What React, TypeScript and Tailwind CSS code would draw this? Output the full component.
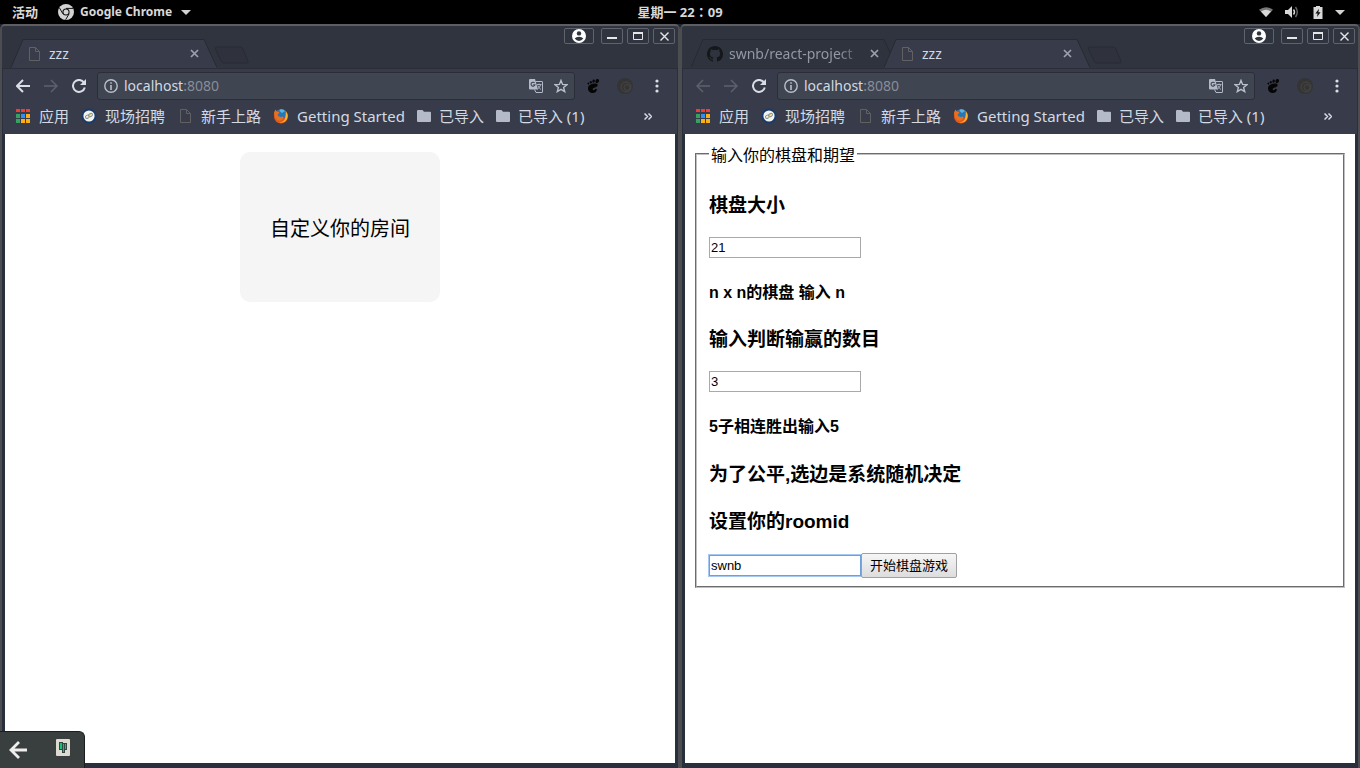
import type { ReactNode } from "react";

const UI_FONT = "font-['Noto_Sans','Noto_Sans_CJK_SC',sans-serif]";
const PAGE_FONT = "font-['Liberation_Sans','Noto_Sans_CJK_SC',sans-serif]";

function ChromeIcon() {
  return (
    <svg className="size-4" viewBox="0 0 16 16" aria-hidden="true">
      <circle cx="8" cy="8" r="8" fill="#d3d3d3" />
      <circle cx="8" cy="8" r="3.6" fill="#111" />
      <circle cx="8" cy="8" r="2.5" fill="#d3d3d3" />
      <path d="M8 4.4h7M4.9 9.8 1.4 3.8M11.1 9.8 7.6 15.8" stroke="#111" strokeWidth="1" />
    </svg>
  );
}

function CaretDown() {
  return (
    <svg className="h-[5px] w-[10px]" viewBox="0 0 10 5" aria-hidden="true">
      <path d="M0 0h10L5 5z" fill="#d3d3d3" />
    </svg>
  );
}

function TopBar() {
  return (
    <header
      className={`grid h-6 shrink-0 grid-cols-[1fr_auto_1fr] items-center bg-black text-[12px] leading-6 font-bold text-[#d8d8d8] ${UI_FONT}`}
    >
      <div className="flex items-center pl-3">
        <button type="button" className="text-[13px]">活动</button>
        <button type="button" className="ml-5 flex items-center gap-[6px]">
          <ChromeIcon />
          <span className="pr-[3px]">Google Chrome</span>
          <CaretDown />
        </button>
      </div>
      <time className="font-['Noto_Sans','Noto_Sans_CJK_TC',sans-serif] text-[13px]">星期一 22：09</time>
      <div className="flex items-center justify-end pr-[15px]">
        <svg className="h-[10px] w-[14px]" viewBox="0 0 14 10" role="img" aria-label="Wi-Fi">
          <path d="M0 2.8Q7-2.4 14 2.8L7 10z" fill="#777" />
          <path d="M2 4.4Q7 1 12 4.4L7 10z" fill="#d8d8d8" />
        </svg>
        <svg className="ml-3 h-3 w-[14px]" viewBox="0 0 14 12" role="img" aria-label="音量">
          <path d="M0 4h3l4-4v12L3 8H0z" fill="#d8d8d8" />
          <path d="M8.5 3.5q2 2.5 0 5" stroke="#d8d8d8" strokeWidth="1.4" fill="none" />
          <path d="M10.5 1q3.6 5 0 10" stroke="#666" strokeWidth="1.4" fill="none" />
        </svg>
        <svg className="ml-[14px] h-[13px] w-[10px]" viewBox="0 0 10 13" role="img" aria-label="电池">
          <path d="M3 0h4v1h2.5v12h-9V1H3z" fill="#d8d8d8" />
          <path d="M6 2.8 2.4 7.4h2.2L4 11l3.600-4.700H5.400z" fill="#111" />
        </svg>
        <span className="ml-3"><CaretDown /></span>
      </div>
    </header>
  );
}

function DocIcon() {
  return (
    <svg className="h-[14px] w-[11px] shrink-0" viewBox="0 0 11 14" fill="none" stroke="#616161" aria-hidden="true">
      <path d="M.5.5h6l4 4v9H.5z M6.5.5v4h4" />
    </svg>
  );
}

function GithubIcon() {
  return (
    <svg className="size-4 shrink-0" viewBox="0 0 16 16" fill="#15171b" aria-hidden="true">
      <path d="M8 0C3.58 0 0 3.58 0 8c0 3.54 2.29 6.53 5.47 7.59.4.07.55-.17.55-.38 0-.19-.01-.82-.01-1.49-2.01.37-2.53-.49-2.69-.94-.09-.23-.48-.94-.82-1.13-.28-.15-.68-.52-.01-.53.63-.01 1.08.58 1.23.82.72 1.21 1.87.87 2.33.66.07-.52.28-.87.51-1.07-1.78-.2-3.64-.89-3.64-3.95 0-.87.31-1.59.82-2.15-.08-.2-.36-1.02.08-2.12 0 0 .67-.21 2.2.82a7.6 7.6 0 0 1 4 0c1.53-1.04 2.2-.82 2.2-.82.44 1.1.16 1.92.08 2.12.51.56.82 1.27.82 2.15 0 3.07-1.87 3.75-3.65 3.95.29.25.54.73.54 1.48 0 1.07-.01 1.93-.01 2.2 0 .21.15.46.55.38A8.01 8.01 0 0 0 16 8c0-4.42-3.58-8-8-8z" />
    </svg>
  );
}

type TabInfo = { title: string; active: boolean; icon: "doc" | "github" };

function Tab({ tab }: { tab: TabInfo }) {
  return (
    <div className={tab.active ? "relative z-10 -mr-[13px] h-[29px] w-[206px]" : "relative -mr-[13px] h-[29px] w-[206px]"}>
      <svg className="absolute inset-0 size-full" viewBox="0 0 206 29" preserveAspectRatio="none" aria-hidden="true">
        <path
          d={tab.active ? "M0 29 12 .5H193L206 29z" : "M0 28 12 .5H193L205 28z"}
          fill={tab.active ? "#383c4a" : "#2f333e"}
        />
        <path d="M0 28.5 12 .5H193L206 28.5" fill="none" stroke="#272a34" />
      </svg>
      <div className="relative flex h-full items-center pr-[18px] pl-[18px]">
        <button
          type="button"
          className={
            tab.active
              ? "flex min-w-0 flex-1 items-center text-left text-[14px] leading-5 text-[#d3dae3]"
              : "-ml-[2px] flex min-w-0 flex-1 items-center text-left text-[14px] leading-5 text-[#9298a5]"
          }
        >
          <span className={tab.icon === "doc" ? "flex w-5 shrink-0 items-center" : "flex w-[22px] shrink-0 items-center"}>
            {tab.icon === "doc" ? <DocIcon /> : <GithubIcon />}
          </span>
          <span
            className={
              tab.icon === "github"
                ? "flex-1 overflow-hidden whitespace-nowrap [mask-image:linear-gradient(to_right,#000_80%,transparent)]"
                : "flex-1 overflow-hidden whitespace-nowrap"
            }
          >
            {tab.title}
          </span>
        </button>
        <button type="button" aria-label="关闭标签页" className="ml-1 flex size-[9px] items-center justify-center">
          <svg className="size-[9px]" viewBox="0 0 9 9" stroke="#9ba1ad" strokeWidth="1.7" aria-hidden="true">
            <path d="M1 1l7 7M8 1 1 8" />
          </svg>
        </button>
      </div>
    </div>
  );
}

function FrameButton({ label, wide, children }: { label: string; wide?: boolean; children: ReactNode }) {
  return (
    <button
      type="button"
      aria-label={label}
      className={
        wide
          ? "mr-[3px] flex h-4 w-[30px] items-center justify-center rounded-[2px] border border-[#5f636d]"
          : "flex h-4 w-[22px] items-center justify-center rounded-[2px] border border-[#5f636d]"
      }
    >
      {children}
    </button>
  );
}

function FrameControls() {
  return (
    <div className="ml-auto flex gap-1 self-start pt-[2px]">
      <FrameButton label="用户" wide>
        <svg className="size-[14px] shrink-0" viewBox="0 0 14 14" aria-hidden="true">
          <circle cx="7" cy="7" r="7" fill="#fff" />
          <circle cx="7" cy="4.4" r="2.2" fill="#2f343f" />
          <path d="M2.700 9.600Q4 7.800 7 7.800T11.300 9.600Q9.600 12 7 12T2.700 9.600z" fill="#2f343f" />
        </svg>
      </FrameButton>
      <FrameButton label="最小化">
        <svg className="size-[10px]" viewBox="0 0 10 10" aria-hidden="true">
          <path d="M0 7h10" stroke="#e4e6ea" strokeWidth="2" />
        </svg>
      </FrameButton>
      <FrameButton label="最大化">
        <svg className="h-2 w-[10px]" viewBox="0 0 10 8" aria-hidden="true">
          <path d="M.5 1v6.5h9V1" stroke="#e4e6ea" fill="none" />
          <path d="M0 1h10" stroke="#e4e6ea" strokeWidth="2" />
        </svg>
      </FrameButton>
      <FrameButton label="关闭">
        <svg className="size-[9px]" viewBox="0 0 9 9" stroke="#e4e6ea" strokeWidth="1.4" aria-hidden="true">
          <path d="M.5.5l8 8M8.5.5l-8 8" />
        </svg>
      </FrameButton>
    </div>
  );
}

function Arrow({ dim, forward }: { dim: boolean; forward?: boolean }) {
  return (
    <svg
      className="h-[14px] w-[14px]"
      viewBox="0 0 14 14"
      fill="none"
      stroke={dim ? "#5d616d" : "#d9dde5"}
      strokeWidth={dim ? 1.5 : 2}
      aria-hidden="true"
    >
      {forward ? <path d="M0 7h13M7 1l6 6-6 6" /> : <path d="M14 7H1M7 1 1 7l6 6" />}
    </svg>
  );
}

function Toolbar({ canGoBack }: { canGoBack: boolean }) {
  return (
    <div className="flex h-[34px] items-center pl-[13px]">
      <div className="flex gap-[14px]">
        <button type="button" aria-label="后退"><Arrow dim={!canGoBack} /></button>
        <button type="button" aria-label="前进"><Arrow dim forward /></button>
        <button type="button" aria-label="重新加载">
          <svg className="size-[14px]" viewBox="0 0 14 14" aria-hidden="true">
            <path d="M12 3.6A6 6 0 1 0 12.8 8.5" fill="none" stroke="#d9dde5" strokeWidth="2" />
            <path d="M14 0v6H8z" fill="#d9dde5" />
          </svg>
        </button>
      </div>
      <div className="ml-[11px] flex h-7 min-w-0 flex-1 items-center rounded-[3px] border border-[#2b2e39] bg-[#404552] px-[6px]">
        <svg className="size-[14px] shrink-0" viewBox="0 0 14 14" aria-hidden="true">
          <circle cx="7" cy="7" r="6.2" fill="none" stroke="#b9bfcb" strokeWidth="1.4" />
          <path d="M6.2 3.2h1.6v1.6H6.2zM6.2 6h1.6v5H6.2z" fill="#b9bfcb" />
        </svg>
        <div className="ml-[6px] flex-1 text-[14px] leading-5 text-[#d3dae3]">
          localhost<span className="text-[#878d9a]">:8080</span>
        </div>
        <button type="button" aria-label="翻译此页">
          <svg className="size-[14px]" viewBox="0 0 14 14" aria-hidden="true">
            <path d="M1 0h5l3 10.5H1q-1 0-1-1V1q0-1 1-1z" fill="#b4bac8" />
            <path d="M6.500 2.500H13q.5 0 .5.5v10q0 .5-.5.5H7L5.500 10.500" fill="none" stroke="#b4bac8" />
            <path d="M5.600 3.900A2 2 0 1 0 6 5.700H4.200" fill="none" stroke="#404552" strokeWidth="1.1" />
            <path d="M8 5.500h4.500M10.200 4.500v1M11.800 5.500Q11 8.500 8.500 10M8.800 6.500q1 2.500 3.200 4" fill="none" stroke="#b4bac8" strokeWidth=".9" />
          </svg>
        </button>
        <button type="button" aria-label="添加书签" className="ml-[11px]">
          <svg className="size-[14px]" viewBox="0 0 14 14" aria-hidden="true">
            <path d="M7 1.400l1.600 4 4.300.3-3.300 2.700 1.100 4.200L7 10.300l-3.700 2.300 1.100-4.200L1.100 5.700l4.300-.3z" fill="none" stroke="#b9bfcb" strokeWidth="1.400" />
          </svg>
        </button>
      </div>
      <div className="flex w-[102px] shrink-0 items-center pl-3">
        <button type="button" aria-label="GNOME">
          <svg className="h-[14px] w-3" viewBox="0 0 12 14" fill="#050505" aria-hidden="true">
            <ellipse cx="10.2" cy="2" rx="1.7" ry="2.1" transform="rotate(20 10.2 2)" />
            <ellipse cx="6.6" cy="2.1" rx="1.2" ry="1.6" transform="rotate(10 6.6 2.1)" />
            <ellipse cx="3.8" cy="3.2" rx="1" ry="1.3" />
            <ellipse cx="1.4" cy="4.6" rx=".9" ry="1.1" />
            <path d="M8.8 4.6C5 4.6 1 6 1 9.4 1 12 3.2 14 5.6 14c2 0 4-1.200 4.200-3 .2-1.500-1.400-1.400-2-.4-.6 1-1.900.9-2.100-.1C5.400 8.600 10 8.800 10.600 6.600c.3-1.200-.5-2-1.800-2z" />
          </svg>
        </button>
        <button type="button" aria-label="扩展程序" className="ml-[18px]">
          <svg className="size-4" viewBox="0 0 16 16" fill="none" aria-hidden="true">
            <circle cx="8" cy="8" r="8" fill="#343435" />
            <circle cx="9" cy="9" r="5" stroke="#454546" />
            <circle cx="10" cy="9.500" r="3" stroke="#454546" />
          </svg>
        </button>
        <button type="button" aria-label="菜单" className="ml-[22px]">
          <svg className="h-[14px] w-[4px]" viewBox="0 0 4 14" fill="#d9dde5" aria-hidden="true">
            <circle cx="2" cy="2" r="1.600" />
            <circle cx="2" cy="7" r="1.600" />
            <circle cx="2" cy="12" r="1.600" />
          </svg>
        </button>
      </div>
    </div>
  );
}

function AppsIcon() {
  return (
    <svg className="size-[14px]" viewBox="0 0 14 14" aria-hidden="true">
      <path d="M0 0h4v3H0zM5 0h4v3H5zM10 0h4v3h-4z" fill="#f03c32" />
      <path d="M0 5h4v4H0zM0 10h4v4H0z" fill="#34a35f" />
      <path d="M5 5h4v4H5z" fill="#2f8df5" />
      <path d="M10 5h4v4h-4zM5 10h4v4H5zM10 10h4v4h-4z" fill="#fbae16" />
    </svg>
  );
}

function JobsIcon() {
  return (
    <svg className="size-4" viewBox="0 0 16 16" aria-hidden="true">
      <circle cx="8" cy="8" r="7.500" fill="#173a6e" />
      <circle cx="8" cy="8" r="5.600" fill="#f4f4ee" />
      <ellipse cx="6.400" cy="8.700" rx="2" ry="1.500" transform="rotate(-30 6.400 8.700)" fill="none" stroke="#7d8f9c" />
      <ellipse cx="9.600" cy="7" rx="2" ry="1.500" transform="rotate(-30 9.600 7)" fill="none" stroke="#7d8f9c" />
      <path d="M7 10.200 9.500 5.800" stroke="#d2b93f" strokeWidth="1" />
    </svg>
  );
}

function FirefoxIcon() {
  return (
    <svg className="size-4" viewBox="0 0 16 16" aria-hidden="true">
      <circle cx="8" cy="8.500" r="7" fill="#e4581b" />
      <circle cx="8.500" cy="6" r="5" fill="#2777b8" />
      <path d="M7 1.500a5 5 0 0 1 5 1.500L9 5 6.500 3z" fill="#5bb5e0" />
      <path d="M1 4.500Q2 2 3 1.600q0 1.800 1.200 2.200l2 .2q.2 1.600-1.400 2.200-.4 1.600 1 2.400 2 .8 3.600-.2 1.600 0 1 1.600-1.600 3-5 2.600Q1.500 11 1 4.500z" fill="#e8701c" />
      <path d="M12.800 3q3.400 4.800.6 9-2.800 3.400-7 2.600 4.800-.8 5.800-4.400.8-3.600.6-7.200z" fill="#fbb62c" />
    </svg>
  );
}

function FolderIcon() {
  return (
    <svg className="h-3 w-[14px]" viewBox="0 0 14 12" aria-hidden="true">
      <path d="M1 0h4.500L7 1.800h6q1 0 1 1V11q0 1-1 1H1q-1 0-1-1V1q0-1 1-1z" fill="#b4bac8" />
    </svg>
  );
}

function Bookmark({ icon, text }: { icon: ReactNode; text: string }) {
  return (
    <a href="#" className="flex shrink-0 items-center gap-2 whitespace-nowrap">
      {icon}
      <span>{text}</span>
    </a>
  );
}

function BookmarksBar() {
  return (
    <nav className="flex h-[26px] items-center pr-[25px] pl-[13px] text-[15px] leading-5 text-[#d3dae3]">
      <div className="flex min-w-0 flex-1 items-center gap-3 overflow-hidden">
        <Bookmark icon={<span className="w-[15px]"><AppsIcon /></span>} text="应用" />
        <Bookmark icon={<JobsIcon />} text="现场招聘" />
        <Bookmark icon={<span className="flex w-4 justify-center"><DocIcon /></span>} text="新手上路" />
        <Bookmark icon={<FirefoxIcon />} text="Getting Started" />
        <Bookmark icon={<FolderIcon />} text="已导入" />
        <Bookmark icon={<FolderIcon />} text="已导入 (1)" />
      </div>
      <button type="button" aria-label="更多书签">
        <svg className="h-[7px] w-2" viewBox="0 0 8 7" fill="none" stroke="#d3dae3" strokeWidth="1.500" aria-hidden="true">
          <path d="M.5.5l3 3-3 3M4.500.5l3 3-3 3" />
        </svg>
      </button>
    </nav>
  );
}

function BrowserWindow({ label, tabs, canGoBack, children }: { label: string; tabs: TabInfo[]; canGoBack: boolean; children: ReactNode }) {
  return (
    <section
      aria-label={label}
      className="flex min-w-0 flex-col rounded-t-[5px] border-x-2 border-t-2 border-x-[#4b4d50] border-t-[#5c5e62] bg-[#2f343f]"
    >
      <div className={`flex h-[42px] items-end pr-[3px] pl-[9px] ${UI_FONT}`}>
        {tabs.map((tab) => (
          <Tab key={tab.title} tab={tab} />
        ))}
        <button type="button" aria-label="打开新的标签页" className="mb-1 ml-[10px]">
          <svg className="h-[18px] w-[35px]" viewBox="0 0 35 18" aria-hidden="true">
            <path d="M2 1h24q2 0 3 2l5 12q.5 2-1 2H10q-2 0-3-2L1.500 3Q1 1 2 1z" fill="#2f323d" stroke="#282b35" />
          </svg>
        </button>
        <FrameControls />
      </div>
      <div className="flex flex-1 flex-col bg-[#2a2f3d] px-[3px] pb-[5px]">
        <div className={`-mx-[2px] h-[66px] border-t border-[#2b2e39] bg-[#383c4a] ${UI_FONT}`}>
          <Toolbar canGoBack={canGoBack} />
          <BookmarksBar />
        </div>
        <div className={`flex-1 bg-white text-black ${PAGE_FONT}`}>{children}</div>
      </div>
    </section>
  );
}

const fieldClass = "block h-[21px] w-[152px] border border-[#a9a9a9] bg-white px-px text-[13px] leading-4 outline-none";

function RoomForm() {
  return (
    <form className="px-[10px] pt-[9px]" onSubmit={(event) => event.preventDefault()}>
      <fieldset className="border-2 border-[#c0c0c0] px-3 pb-2 [border-style:groove]">
        <legend className="px-[2px] pt-[3px] text-[16px] leading-[19px]">输入你的棋盘和期望</legend>
        <label htmlFor="size" className="mt-[29px] mb-[19px] block text-[19px] leading-6 font-bold">棋盘大小</label>
        <input id="size" className={fieldClass} defaultValue="21" />
        <h4 className="mt-[25px] text-[16px] leading-5 font-bold">n x n的棋盘 输入 n</h4>
        <label htmlFor="count" className="mt-[25px] mb-[19px] block text-[19px] leading-6 font-bold">输入判断输赢的数目</label>
        <input id="count" className={fieldClass} defaultValue="3" />
        <h4 className="mt-[25px] text-[16px] leading-5 font-bold">5子相连胜出输入5</h4>
        <h3 className="mt-[26px] text-[19px] leading-6 font-bold">为了公平,选边是系统随机决定</h3>
        <label htmlFor="room" className="mt-[23px] mb-[19px] block text-[19px] leading-6 font-bold">设置你的roomid</label>
        <div className="flex items-center">
          <input
            id="room"
            className="block h-[21px] w-[152px] border border-[#6f9fd8] bg-white px-px text-[13px] leading-4 ring-1 ring-[#a6c8f5] outline-none"
            defaultValue="swnb"
          />
          <button
            type="submit"
            className="h-[25px] w-24 rounded-[2px] border border-[#a0a0a0] bg-linear-to-b from-[#f6f6f6] to-[#dddddd] text-[13px] leading-5 whitespace-nowrap"
          >
            开始棋盘游戏
          </button>
        </div>
      </fieldset>
    </form>
  );
}

function Tray() {
  return (
    <aside className="absolute bottom-0 left-0 flex h-[37px] w-[85px] items-center rounded-tr-[6px] border-t border-r border-[#1b1e1e] bg-[#393f3f] pl-[9px]">
      <button type="button" aria-label="返回">
        <svg className="h-[18px] w-[18px]" viewBox="0 0 18 18" fill="none" stroke="#eeeeec" strokeWidth="2.800" aria-hidden="true">
          <path d="M18 9H2M10 1 2 9l8 8" />
        </svg>
      </button>
      <button type="button" aria-label="输入法" className="ml-[29px] pb-[5px]">
        <svg className="h-[17px] w-[14px]" viewBox="0 0 14 17" aria-hidden="true">
          <rect width="14" height="17" rx="1" fill="#ded9d1" />
          <path d="M3 3h4v1h4v7H9v3H6v-3H3z" fill="#2c4a42" />
          <path d="M4 4h2v6H4zM7 5h1v8H7zM9 5h1v5H9z" fill="#12c277" />
        </svg>
      </button>
    </aside>
  );
}

export default function App() {
  return (
    <div className="relative flex min-h-screen flex-col bg-black">
      <TopBar />
      <main className="grid flex-1 grid-cols-2 bg-[#1f2430]">
        <BrowserWindow label="房间" canGoBack tabs={[{ title: "zzz", active: true, icon: "doc" }]}>
          <div className="flex justify-center pt-[18px]">
            <button type="button" className="h-[150px] w-[200px] rounded-[10px] bg-[#f5f5f5] pt-[3px] text-[20px]">
              自定义你的房间
            </button>
          </div>
        </BrowserWindow>
        <BrowserWindow
          label="设置"
          canGoBack={false}
          tabs={[
            { title: "swnb/react-project", active: false, icon: "github" },
            { title: "zzz", active: true, icon: "doc" },
          ]}
        >
          <RoomForm />
        </BrowserWindow>
      </main>
      <Tray />
    </div>
  );
}
